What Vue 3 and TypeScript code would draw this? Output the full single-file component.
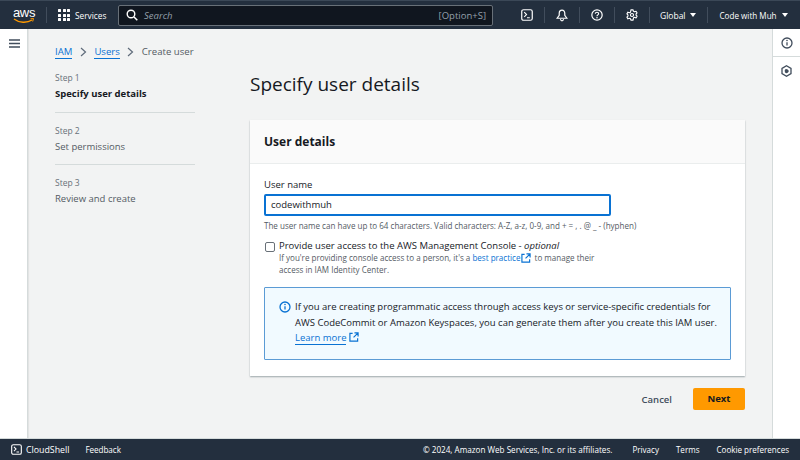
<script setup lang="ts">
const steps = [
  { n: 'Step 1', t: 'Specify user details', active: true },
  { n: 'Step 2', t: 'Set permissions', active: false },
  { n: 'Step 3', t: 'Review and create', active: false },
]
const dots = Array.from({ length: 9 }, (_, i) => i)
</script>

<template>
  <div class="page">
    <header class="top">
      <div class="logo">
        <span class="aws">aws</span>
        <svg class="smile" width="22" height="6" viewBox="0 0 22 6"><path d="M1 1c5 4 13 4.300 18 1" fill="none" stroke="#f90" stroke-width="1.300"/><path d="M17.500 .8l3-.3-.8 3" fill="none" stroke="#f90" stroke-width="1"/></svg>
      </div>
      <i class="sep first"></i>
      <div class="grid"><b v-for="d in dots" :key="d"></b></div>
      <span class="services">Services</span>
      <div class="search">
        <svg width="12" height="12" viewBox="0 0 12 12"><circle cx="5" cy="5" r="3.800" fill="none" stroke="#fff" stroke-width="1.400"/><path d="M8 8l3.300 3.300" stroke="#fff" stroke-width="1.500"/></svg>
        <em>Search</em>
        <span class="hint">[Option+S]</span>
      </div>
      <div class="tools">
        <svg class="ic" width="12" height="12" viewBox="0 0 13 13"><rect x=".8" y=".8" width="11.400" height="11.400" rx="2" fill="none" stroke="#fff" stroke-width="1.300"/><path d="M3.500 3.500l2.500 2.500-2.500 2.500M6.500 9.500h3" fill="none" stroke="#fff" stroke-width="1.200"/></svg>
        <i class="sep"></i>
        <svg class="ic wide" width="12" height="13" viewBox="0 0 13 14"><path d="M6.500 1.200c-2 0-3 1.500-3 3.300v2.300L1.200 10h10.600L9.500 6.800V4.500c0-1.800-1-3.300-3-3.300z" fill="none" stroke="#fff" stroke-width="1.300"/><path d="M4.800 11c.2 1.200 .8 1.800 1.700 1.800s1.500-.6 1.700-1.800" fill="none" stroke="#fff" stroke-width="1.200"/></svg>
        <i class="sep"></i>
        <svg class="ic wide" width="12" height="12" viewBox="0 0 13 13"><circle cx="6.500" cy="6.500" r="5.600" fill="none" stroke="#fff" stroke-width="1.300"/><path d="M4.700 5.200c0-1 .8-1.700 1.800-1.700s1.800.7 1.800 1.600c0 1.300-1.800 1.300-1.800 2.700" fill="none" stroke="#fff" stroke-width="1.200"/><circle cx="6.500" cy="9.600" r=".8" fill="#fff"/></svg>
        <i class="sep"></i>
        <svg class="ic wide" width="12" height="12" viewBox="0 0 13 13"><path d="M5.300 1h2.400l.4 1.500 1.400.6 1.400-.7 1.100 1.900-1.100 1.100v1.300l1.100 1.100-1.100 1.900-1.400-.7-1.400.6L7.700 12H5.300l-.4-1.400-1.400-.6-1.400.7L1 8.800l1.100-1.100V6.400L1 5.300l1.100-1.900 1.400.7 1.400-.6z" fill="none" stroke="#fff" stroke-width="1.200" stroke-linejoin="round"/><circle cx="6.500" cy="6.500" r="1.700" fill="none" stroke="#fff" stroke-width="1.200"/></svg>
        <i class="sep"></i>
        <span class="menu m1">Global<u></u></span>
        <i class="sep"></i>
        <span class="menu m2">Code with Muh<u></u></span>
      </div>
    </header>

    <div class="body">
      <aside class="lnav">
        <svg width="11" height="9" viewBox="0 0 11 9"><path d="M0 1h11M0 4.500h11M0 8h11" stroke="#414d5c" stroke-width="1.400"/></svg>
      </aside>

      <main class="main">
        <nav class="crumbs">
          <a>IAM</a>
          <svg width="7" height="10" viewBox="0 0 7 10"><path d="M1 1l4.500 4L1 9" fill="none" stroke="#5f6b7a" stroke-width="1.200"/></svg>
          <a>Users</a>
          <svg width="7" height="10" viewBox="0 0 7 10"><path d="M1 1l4.500 4L1 9" fill="none" stroke="#5f6b7a" stroke-width="1.200"/></svg>
          <span>Create user</span>
        </nav>
        <div class="cols">
          <ol class="steps">
            <li v-for="s in steps" :key="s.n">
              <small>{{ s.n }}</small>
              <span :class="{ on: s.active }">{{ s.t }}</span>
            </li>
          </ol>
          <section class="content">
            <h1>Specify user details</h1>
            <div class="card">
              <h2>User details</h2>
              <div class="cbody">
                <label class="lbl">User name</label>
                <div class="input">codewithmuh</div>
                <p class="help">The user name can have up to 64 characters. Valid characters: A-Z, a-z, 0-9, and + = , . @ _ - (hyphen)</p>
                <div class="check">
                  <span class="box"></span>
                  <div>
                    <div class="ct">Provide user access to the AWS Management Console - <em>optional</em></div>
                    <p class="cd">If you're providing console access to a person, it's a <a>best practice</a>
                      <svg class="ext" width="10" height="10" viewBox="0 0 11 11"><path d="M4 1.500H1v8.500h8.500V7M6 1h4v4M10 1L5 6" fill="none" stroke="#0972d3" stroke-width="1.300"/></svg>
                      to manage their<br>access in IAM Identity Center.</p>
                  </div>
                </div>
                <div class="info">
                  <svg width="12" height="12" viewBox="0 0 12 12"><circle cx="6" cy="6" r="5" fill="none" stroke="#0972d3" stroke-width="1.300"/><path d="M6 5.300v3.200" stroke="#0972d3" stroke-width="1.300"/><circle cx="6" cy="3.500" r=".8" fill="#0972d3"/></svg>
                  <div class="itext">
                    If you are creating programmatic access through access keys or service-specific credentials for<br>
                    AWS CodeCommit or Amazon Keyspaces, you can generate them after you create this IAM user.<br>
                    <a>Learn more</a>
                    <svg class="ext2" width="10" height="10" viewBox="0 0 11 11"><path d="M4 1.500H1v8.500h8.500V7M6 1h4v4M10 1L5 6" fill="none" stroke="#0972d3" stroke-width="1.300"/></svg>
                  </div>
                </div>
              </div>
            </div>
            <div class="actions">
              <span class="cancel">Cancel</span>
              <span class="next">Next</span>
            </div>
          </section>
        </div>
      </main>

      <aside class="rnav">
        <div class="rb">
          <svg width="12" height="12" viewBox="0 0 12 12"><circle cx="6" cy="6" r="5" fill="none" stroke="#414d5c" stroke-width="1.300"/><path d="M6 5.300v3.200" stroke="#414d5c" stroke-width="1.300"/><circle cx="6" cy="3.500" r=".8" fill="#414d5c"/></svg>
        </div>
        <div class="rb second">
          <svg width="11" height="12" viewBox="0 0 11 12"><path d="M5.500 .8l4.500 2.600v5.200l-4.500 2.600L1 8.600V3.400z" fill="none" stroke="#414d5c" stroke-width="1.300"/><path d="M3.700 5.300a2 2 0 1 1 .2 1.900z" fill="#414d5c"/></svg>
        </div>
      </aside>
    </div>

    <footer class="foot">
      <svg class="fic" width="11" height="11" viewBox="0 0 13 13"><rect x=".8" y=".8" width="11.400" height="11.400" rx="2" fill="none" stroke="#fff" stroke-width="1.300"/><path d="M3.500 3.500l2.500 2.500-2.500 2.500M6.500 9.500h3" fill="none" stroke="#fff" stroke-width="1.200"/></svg>
      <span class="fcs">CloudShell</span>
      <span class="ffb">Feedback</span>
      <span class="spacer"></span>
      <span class="copy">© 2024, Amazon Web Services, Inc. or its affiliates.</span>
      <span class="fl">Privacy</span>
      <span class="fl2">Terms</span>
      <span class="fl2">Cookie preferences</span>
    </footer>
  </div>
</template>

<style>
html, body { margin: 0; overflow: hidden; }
</style>

<style scoped>
.page { width: 800px; height: 460px; display: flex; flex-direction: column; font-family: "Open Sans", "Noto Sans", sans-serif; color: #16191f; background: #fff; overflow: hidden; }
.top { height: 29px; flex: none; background: #232f3e; border-top: 1px solid #3b4857; box-sizing: border-box; display: flex; align-items: center; color: #fff; font-size: 8px; }
.logo { width: 24px; margin-left: 12px; position: relative; height: 22px; }
.aws { display: block; font: 13px/13px "Liberation Sans", sans-serif; letter-spacing: -.3px; text-align: center; margin-top: 2px; }
.smile { position: absolute; left: 1px; top: 14px; }
.sep { display: block; width: 1px; height: 16px; background: #414d5c; flex: none; }
.sep.first { margin-left: 10px; }
.grid { margin-left: 11px; display: grid; grid-template-columns: repeat(3, 3px); gap: 1.500px; }
.grid b { width: 3px; height: 3px; background: #fff; border-radius: .5px; }
.services { margin-left: 5px; font-size: 8.300px; white-space: nowrap; width: 43px; }
.search { width: 375px; height: 21px; box-sizing: border-box; background: #10161f; border: 1px solid #687078; border-radius: 2px; display: flex; align-items: center; padding: 0 6px 0 7px; }
.search em { margin-left: 6px; font-size: 9.500px; color: #95a0ab; }
.hint { margin-left: auto; font-size: 9.500px; color: #95a0ab; }
.tools { display: flex; align-items: center; margin-left: 28px; }
.ic { margin-right: 11px; }
.ic.wide { margin-left: 11px; }
.menu { display: flex; align-items: center; white-space: nowrap; }
.menu u { display: block; margin-left: 4px; width: 0; height: 0; border: 3px solid transparent; border-top: 4px solid #fff; border-bottom: 0; }
.m1 { font-size: 8.500px; margin: 0 11px 0 10px; }
.m2 { font-size: 8.100px; margin-left: 12px; }
.m2 u { margin-left: 5px; }

.body { flex: 1; min-height: 0; display: flex; }
.lnav { width: 28px; flex: none; box-sizing: border-box; border-right: 1px solid #d5dbdb; padding: 10px 0 0 9px; box-shadow: 1px 0 1px rgba(0,0,0,.06); z-index: 1; }
.lnav svg { display: block; }
.main { flex: 1; background: #f2f3f3; padding: 16px 27px 0 27px; box-sizing: border-box; min-width: 0; }
.crumbs { display: flex; align-items: center; font-size: 9.600px; line-height: 14px; height: 14px; color: #545b64; }
.crumbs a { color: #0972d3; font-weight: 400; border-bottom: 1px solid #0972d3; line-height: 13px; }
.crumbs svg { margin: 0 7.500px; }
.crumbs span { font-weight: 500; }
.cols { display: flex; margin-top: 13px; }
.steps { width: 140px; list-style: none; margin: 0; padding: 0; flex: none; }
.steps li { height: 52px; box-sizing: border-box; padding-top: 12px; border-bottom: 1px solid #d5dbdb; display: flex; flex-direction: column; }
.steps li:first-child { height: 41px; padding-top: 0; }
.steps li:last-child { border-bottom: 0; }
.steps small { font-size: 8.500px; line-height: 12px; color: #687078; }
.steps span { margin-top: 3px; font-size: 9.500px; line-height: 13px; color: #545b64; }
.steps .on { margin-top: 3px; color: #16191f; font-weight: 700; }
.content { margin-left: 55px; width: 495px; flex: none; }
h1 { margin: -1px 0 0; font-size: 19px; font-weight: 400; line-height: 26px; color: #16191f; }
.card { margin-top: 23px; background: #fff; box-shadow: 0 1px 1.500px rgba(0,28,36,.35); }
h2 { margin: 0; height: 44px; box-sizing: border-box; padding: 14px 14px 0; background: #fafafa; border-bottom: 1px solid #eaeded; font-size: 12px; line-height: 16px; font-weight: 700; }
.cbody { padding: 14px 14px 16px; height: 212px; box-sizing: border-box; }
.lbl { display: block; font-size: 9.500px; line-height: 13px; font-weight: 500; color: #16191f; }
.input { margin-top: 3px; width: 347px; height: 22px; box-sizing: border-box; border: 2px solid #0972d3; border-radius: 2px; padding: 0 5px; font-size: 9.500px; line-height: 18px; font-weight: 500; }
.help { margin: 4px 0 0; font-size: 8.050px; line-height: 11px; color: #545b64; white-space: nowrap; }
.check { margin-top: 9px; display: flex; }
.box { display: block; width: 8px; height: 8px; border: 1px solid #687078; border-radius: 2px; flex: none; margin: 2px 4px 0 1px; }
.ct { font-size: 9.500px; line-height: 12px; }
.ct em { font-style: italic; }
.cd { margin: 0; font-size: 8.050px; line-height: 11.500px; color: #545b64; }
.cd a { color: #0972d3; }
.ext { vertical-align: -2px; margin: 0 1px; }
.info { margin-top: 12px; width: 467px; height: 73px; box-sizing: border-box; background: #f1faff; border: 1px solid #5b9bd5; border-radius: 1px; padding: 11px 14px; display: flex; gap: 4px; }
.info svg:first-child { flex: none; margin-top: 2px; }
.itext { font-size: 9.500px; line-height: 15.500px; white-space: nowrap; }
.itext a { color: #0972d3; border-bottom: 1px solid #0972d3; }
.ext2 { vertical-align: -1px; margin-left: 3px; }
.actions { margin-top: 12px; display: flex; justify-content: flex-end; align-items: center; }
.cancel { font-size: 9.500px; font-weight: 600; color: #414d5c; margin-right: 21px; }
.next { width: 52px; height: 22px; background: #ff9900; border-radius: 2px; font-size: 9.500px; line-height: 22px; font-weight: 700; text-align: center; color: #16191f; }
.rnav { width: 28px; flex: none; box-sizing: border-box; border-left: 1px solid #d5dbdb; }
.rb { height: 27px; display: flex; align-items: center; justify-content: center; border-bottom: 1px solid #d5dbdb; }
.rb.second { border-bottom: 0; }
.foot { height: 22px; flex: none; box-sizing: border-box; background: #232f3e; border-top: 1px solid #d5dbdb; display: flex; align-items: center; padding: 0 11px; color: #fff; font-size: 8.050px; white-space: nowrap; }
.fcs { margin-left: 4px; font-size: 8.800px; }
.ffb { margin-left: 16px; font-size: 8.100px; letter-spacing: -.05px; }
.spacer { flex: 1; }
.copy { font-size: 8.150px; }
.fl { margin-left: 20px; }
.fl2 { margin-left: 17px; }
</style>
